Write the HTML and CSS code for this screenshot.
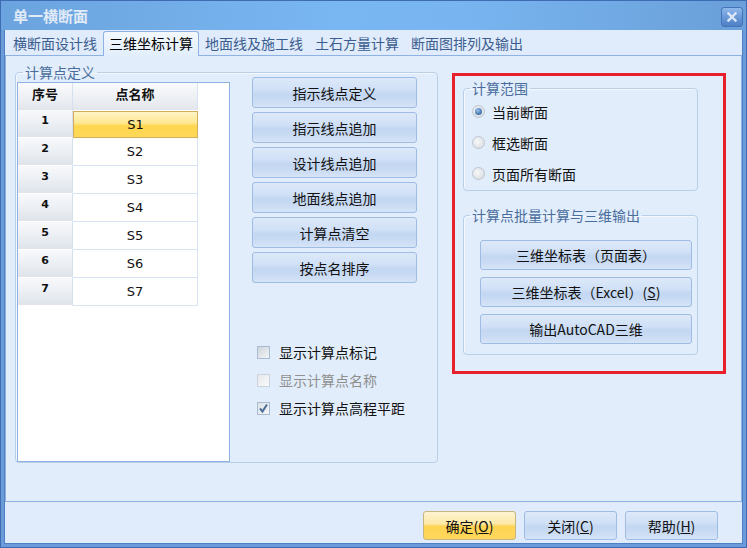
FILE: index.html
```html
<!DOCTYPE html>
<html>
<head>
  <title>单一横断面</title>
  <link rel="stylesheet" href="styles.css">
</head>
<body>
  <div class="window">
    <div class="titlebar">
      <span class="title">单一横断面</span>
      <button class="close">
        <svg width="10" height="10" viewBox="0 0 10 10">
          <path d="M1.5 1.5 L8.5 8.5 M8.5 1.5 L1.5 8.5" stroke="#dbe7f6" stroke-width="2.4" stroke-linecap="square"/>
        </svg>
      </button>
    </div>

    <div class="client">
      <div class="tabs">
        <span class="tab">横断面设计线</span>
        <span class="tab active">三维坐标计算</span>
        <span class="tab">地面线及施工线</span>
        <span class="tab">土石方量计算</span>
        <span class="tab">断面图排列及输出</span>
      </div>

      <div class="panel">
        <fieldset class="group calc-def">
          <legend>计算点定义</legend>
          <div class="calc-body">
            <div class="grid">
              <div class="grid-row head">
                <div class="rh">序号</div>
                <div class="nm">点名称</div>
              </div>
              <div class="grid-row">
                <div class="rh">1</div>
                <div class="nm selected">S1</div>
              </div>
              <div class="grid-row">
                <div class="rh">2</div>
                <div class="nm">S2</div>
              </div>
              <div class="grid-row">
                <div class="rh">3</div>
                <div class="nm">S3</div>
              </div>
              <div class="grid-row">
                <div class="rh">4</div>
                <div class="nm">S4</div>
              </div>
              <div class="grid-row">
                <div class="rh">5</div>
                <div class="nm">S5</div>
              </div>
              <div class="grid-row">
                <div class="rh">6</div>
                <div class="nm">S6</div>
              </div>
              <div class="grid-row">
                <div class="rh">7</div>
                <div class="nm">S7</div>
              </div>
            </div>

            <div class="side">
              <div class="btn-col">
                <button class="btn">指示线点定义</button>
                <button class="btn">指示线点追加</button>
                <button class="btn">设计线点追加</button>
                <button class="btn">地面线点追加</button>
                <button class="btn">计算点清空</button>
                <button class="btn">按点名排序</button>
              </div>

              <div class="checks">
                <label class="check"><span class="cb"></span>显示计算点标记</label>
                <label class="check disabled"><span class="cb"></span>显示计算点名称</label>
                <label class="check"><span class="cb checked">
                  <svg width="11" height="11" viewBox="0 0 11 11">
                    <path d="M2 5.5 L4.5 8.5 L9 1.5" fill="none" stroke="#4b6e98" stroke-width="2"/>
                  </svg>
                </span>显示计算点高程平距</label>
              </div>
            </div>
          </div>
        </fieldset>

        <div class="highlight">
          <fieldset class="group range">
            <legend>计算范围</legend>
            <label class="radio-row"><span class="radio checked"></span>当前断面</label>
            <label class="radio-row"><span class="radio"></span>框选断面</label>
            <label class="radio-row"><span class="radio"></span>页面所有断面</label>
          </fieldset>

          <fieldset class="group batch">
            <legend>计算点批量计算与三维输出</legend>
            <button class="btn wide">三维坐标表（页面表）</button>
            <button class="btn wide">三维坐标表（Excel）(<u>S</u>)</button>
            <button class="btn wide">输出AutoCAD三维</button>
          </fieldset>
        </div>
      </div>

      <div class="footer">
        <button class="btn dlg default">确定(<u>O</u>)</button>
        <button class="btn dlg">关闭(<u>C</u>)</button>
        <button class="btn dlg">帮助(<u>H</u>)</button>
      </div>
    </div>
  </div>
</body>
</html>
```

FILE: styles.css
```css
* {
  box-sizing: border-box;
}

body {
  margin: 0;
  font-family: "Noto Sans CJK SC", sans-serif;
  font-size: 14px;
  background-color: #ffffff;
}

.window {
  width: 747px;
  height: 548px;
  border: 1px solid #3d6cb2;
  background-color: #6b9bd9;
  display: flex;
  flex-direction: column;
}

.titlebar {
  height: 29px;
  display: flex;
  align-items: center;
  justify-content: space-between;
  padding: 0 3px 0 12px;
  background: linear-gradient(to right, #6ba3de 0%, #79b7f2 45%, #78b5f0 62%, #6a9fd9 100%);
}

.title {
  color: #e1ebf7;
  font-size: 15px;
  font-weight: bold;
  line-height: 20px;
}

.close {
  width: 22px;
  height: 20px;
  margin-top: 2px;
  padding: 0;
  border: 1px solid #4572b8;
  border-radius: 3px;
  background: linear-gradient(#8fb9ec, #6795d6 55%, #4f80c6);
  display: flex;
  align-items: center;
  justify-content: center;
}

.client {
  flex: 1;
  margin: 0 3px 3px 3px;
  border: 1px solid #4f80c4;
  border-top: none;
  background-color: #e0ecfb;
  display: flex;
  flex-direction: column;
}

/* tabs */
.tabs {
  height: 25px;
  display: flex;
  align-items: flex-end;
  padding-left: 2px;
}

.tab {
  height: 24px;
  line-height: 23px;
  padding: 0 5px;
  border: 1px solid transparent;
  border-bottom: none;
  color: #3c5d8f;
}

.tab.active {
  height: 25px;
  margin-bottom: -1px;
  position: relative;
  z-index: 1;
  color: #000000;
  border-color: #8db2e3;
  border-radius: 3px 3px 0 0;
  background: linear-gradient(#f3f8fe, #e2eefc);
}

.panel {
  height: 447px;
  border: 1px solid #8db2e3;
  background-color: #e1edfb;
  display: flex;
  align-items: flex-start;
  padding: 8px 0 0 9px;
}

/* group boxes */
.group {
  margin: 0;
  border: 1px solid #b9cfe8;
  border-radius: 4px;
  box-shadow: inset 1px 1px 0 #f4f8fd;
}

.group legend {
  padding: 0 2px;
  margin-left: 6px;
  line-height: 16px;
  color: #4a6d9e;
}

.calc-def {
  width: 423px;
  padding: 0 0 0 1px;
}

.calc-body {
  display: flex;
  height: 382px;
}

/* grid */
.grid {
  width: 213px;
  height: 380px;
  margin-top: 2px;
  border: 1px solid #8db2e3;
  background-color: #ffffff;
}

.grid-row {
  display: flex;
  height: 28px;
}

.grid-row.head {
  height: 27px;
}

.rh {
  width: 55px;
  border-right: 1px solid #d6e0ec;
  border-bottom: 1px solid #ffffff;
  background: linear-gradient(#f8f9fb, #e9edf2 60%, #dfe4ea);
  text-align: center;
  font-family: "DejaVu Sans", sans-serif;
  font-weight: bold;
  font-size: 11px;
  line-height: 14px;
  padding-top: 4px;
  color: #111111;
}

.nm {
  width: 125px;
  border-right: 1px solid #d6e4f4;
  border-bottom: 1px solid #d6e4f4;
  text-align: center;
  font-family: "DejaVu Sans", sans-serif;
  font-size: 13px;
  line-height: 27px;
  color: #111111;
}

.head .rh,
.head .nm {
  font-family: "Noto Sans CJK SC", sans-serif;
  font-size: 13px;
  font-weight: bold;
  line-height: 18px;
  padding-top: 2px;
  background: linear-gradient(#f9fafb, #eceff3 60%, #e2e6eb);
  border-bottom: none;
}

.nm.selected {
  border: 1px solid #d2ad5c;
  line-height: 25px;
  margin-top: 1px;
  height: 27px;
  background: linear-gradient(#fff4c6 0%, #ffe890 45%, #ffd64e 55%, #ffd85a 100%);
}

/* side buttons */
.side {
  margin-left: 22px;
  width: 165px;
}

.btn-col {
  margin-top: -3px;
  display: flex;
  flex-direction: column;
  gap: 4px;
}

.btn {
  height: 31px;
  padding: 0;
  border: 1px solid #9fbce4;
  border-radius: 3px;
  background: linear-gradient(#dde9f9 0%, #d0e0f6 40%, #c3d7f2 55%, #cbdcf4 80%, #d6e4f7 100%);
  font-family: "Noto Sans CJK SC", sans-serif;
  font-size: 14px;
  color: #111111;
}

.checks {
  margin-top: 55px;
  padding-left: 5px;
}

.check {
  height: 28px;
  display: flex;
  align-items: center;
  gap: 9px;
  color: #111111;
}

.check.disabled {
  color: #8f8f8f;
}

.cb {
  width: 13px;
  height: 13px;
  border: 1px solid #a7bbd3;
  background: linear-gradient(135deg, #cfd4db, #f3f5f7);
  display: flex;
  align-items: center;
  justify-content: center;
}

.disabled .cb {
  border-color: #c9d2dd;
  background: linear-gradient(135deg, #e6e9ed, #f8f9fa);
}

.cb.checked {
  background: linear-gradient(135deg, #dde1e6, #f5f6f8);
}

/* highlighted area */
.highlight {
  width: 274px;
  height: 301px;
  margin: 9px 0 0 14px;
  border: 3px solid #e8202c;
  padding: 4px 0 0 8px;
}

.range {
  width: 235px;
  padding: 0 0 1px 8px;
}

.range legend {
  margin-left: -2px;
}

.radio-row {
  height: 31px;
  display: flex;
  align-items: center;
  gap: 7px;
  color: #111111;
}

.radio {
  width: 13px;
  height: 13px;
  border-radius: 50%;
  border: 1px solid #bcc6d1;
  background: radial-gradient(circle at 40% 40%, #f6f7f8, #d4d9de);
  display: flex;
  align-items: center;
  justify-content: center;
}

.radio.checked::after {
  content: "";
  width: 7px;
  height: 7px;
  border-radius: 50%;
  background: radial-gradient(circle at 40% 35%, #9cc4ee, #3c6ea8 70%, #2b5790);
}

.batch {
  width: 235px;
  margin-top: 16px;
  padding: 17px 0 10px 16px;
  display: flex;
  flex-direction: column;
  gap: 7px;
}

.batch legend {
  margin-left: -10px;
}

.btn.wide {
  width: 212px;
  height: 30px;
}

/* dialog buttons */
.footer {
  flex: 1;
  display: flex;
  justify-content: flex-end;
  gap: 8px;
  padding: 9px 24px 0 0;
}

.btn.dlg {
  width: 93px;
  height: 29px;
}

.btn.default {
  border-color: #c9b47e;
  background: linear-gradient(#fef4d2 0%, #fde8a4 45%, #ffd453 52%, #ffd75c 100%);
}
```
